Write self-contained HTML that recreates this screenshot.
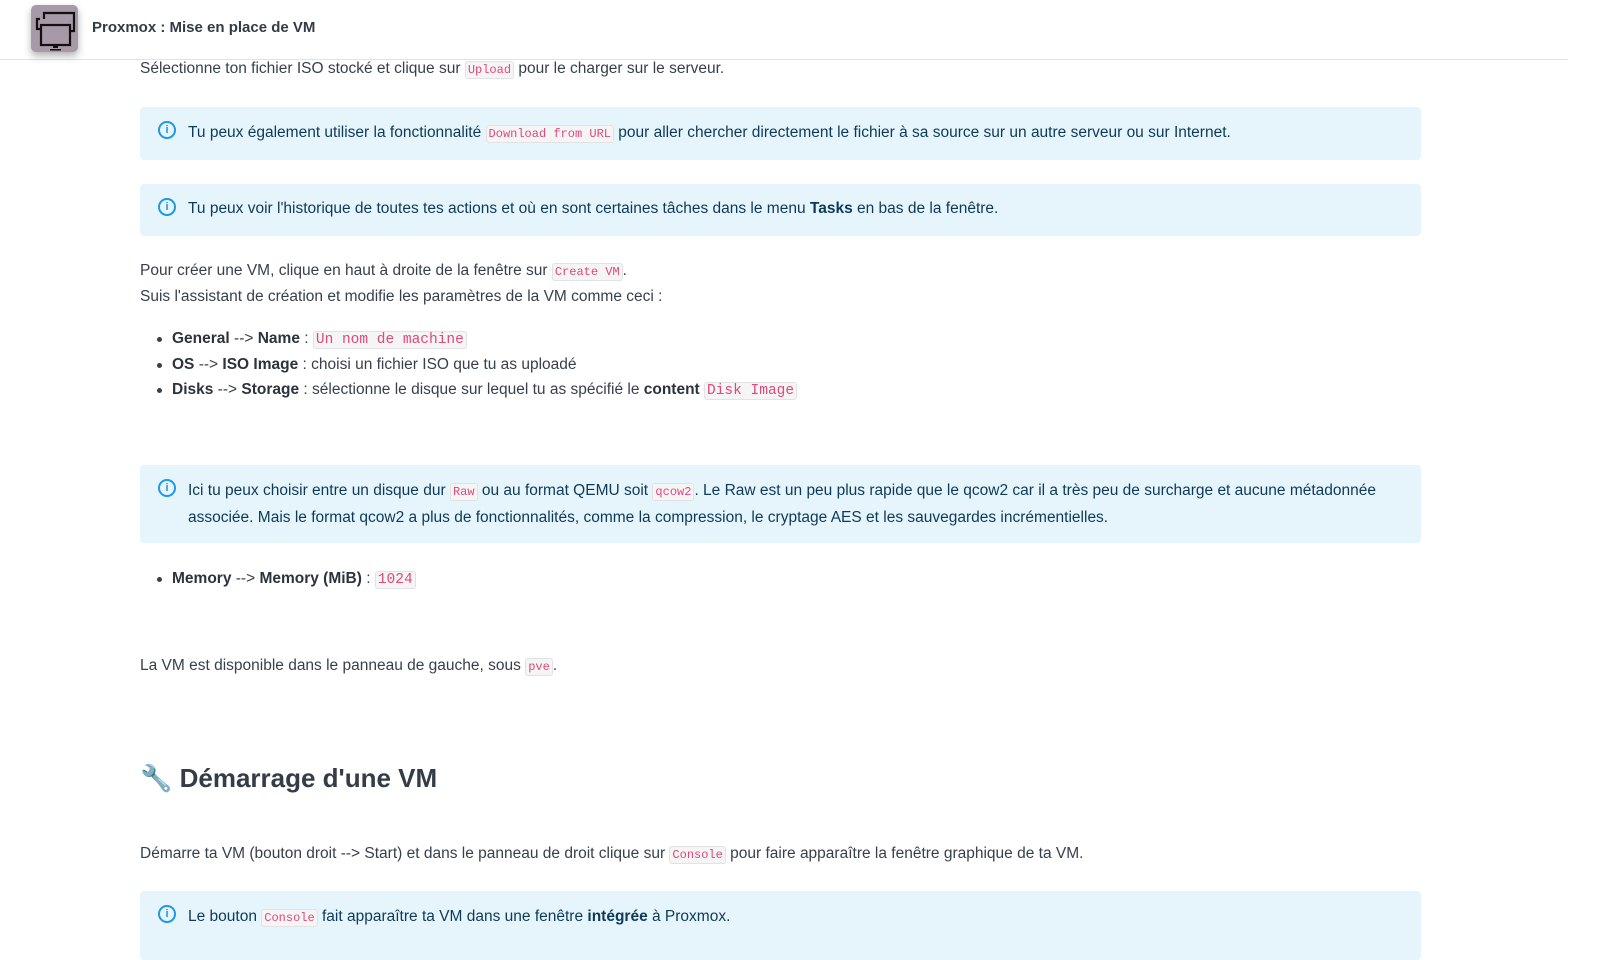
<!DOCTYPE html>
<html><head><meta charset="utf-8"><style>
*{margin:0;padding:0;box-sizing:border-box}
body{width:1614px;height:960px;overflow:hidden;background:#fff;font-family:"Liberation Sans",sans-serif;font-size:15.5px;color:#37404c;position:relative}
.hdr{position:absolute;left:0;top:0;width:1568px;height:60px;border-bottom:1px solid #e2e2e2;background:#fff}
.logo{position:absolute;left:31px;top:5px;width:47px;height:47px;border-radius:5px;background:#a899a8;box-shadow:0 4px 8px rgba(0,0,0,.3)}
.title{position:absolute;left:92px;top:19px;font-weight:bold;font-size:15px;color:#333b45}
.l{position:absolute;left:140px;white-space:nowrap}
code{font-family:"Liberation Mono",monospace;font-size:12px;color:#e0487a;background:#f5f5f5;border:1px solid #e2e2e2;border-radius:3px;padding:1px 2px}
code.b{font-size:14.5px;padding:0 2px}
.co{position:absolute;left:140px;width:1281px;background:#e6f4fc;border-radius:4px;color:#0d3a58}
.co .i{position:absolute;left:18px;top:14px;width:18px;height:18px;border:2px solid #1d9ae0;border-radius:50%;color:#1d9ae0;font-size:11px;font-weight:bold;text-align:center;line-height:14px}
.co p{position:absolute;left:48px;top:16px;line-height:26px;white-space:nowrap}
ul{position:absolute;left:172px;list-style:none}
li{position:relative;height:25.5px;line-height:25px}
li:before{content:"";position:absolute;left:-15px;top:11px;width:5px;height:5px;border-radius:50%;background:#37404c}
b{color:#2c333d}
h2{position:absolute;left:140px;top:763px;font-size:26px;color:#343c47;font-weight:bold}
</style></head><body>
<div class="hdr"><div class="logo"><svg width="47" height="47" viewBox="0 0 47 47"><g fill="none" stroke="#111" stroke-width="2.2"><path d="M13 14V8h30v18h-3"/><path d="M9 14H6v10h3"/><rect x="10" y="20" width="29" height="20" fill="#a899a8"/></g><path d="M22 40h5v3h-5z M19 44h11v1.5H19z" fill="#111"/></svg></div><div class="title">Proxmox : Mise en place de VM</div></div>
<div class="l" style="top:60px">Sélectionne ton fichier ISO stocké et clique sur <code>Upload</code> pour le charger sur le serveur.</div>
<div class="co" style="top:107px;height:53px"><div class="i">i</div><p style="top:13px">Tu peux également utiliser la fonctionnalité <code>Download from URL</code> pour aller chercher directement le fichier à sa source sur un autre serveur ou sur Internet.</p></div>
<div class="co" style="top:184px;height:52px"><div class="i">i</div><p style="top:12px">Tu peux voir l'historique de toutes tes actions et où en sont certaines tâches dans le menu <b style="color:#0d3a58">Tasks</b> en bas de la fenêtre.</p></div>
<div class="l" style="top:262px">Pour créer une VM, clique en haut à droite de la fenêtre sur <code>Create VM</code>.</div>
<div class="l" style="top:288px">Suis l'assistant de création et modifie les paramètres de la VM comme ceci :</div>
<ul style="top:326px">
<li><b>General</b> --&gt; <b>Name</b> : <code class="b">Un nom de machine</code></li>
<li><b>OS</b> --&gt; <b>ISO Image</b> : choisi un fichier ISO que tu as uploadé</li>
<li><b>Disks</b> --&gt; <b>Storage</b> : sélectionne le disque sur lequel tu as spécifié le <b>content</b> <code class="b">Disk Image</code></li>
</ul>
<div class="co" style="top:465px;height:78px"><div class="i">i</div><p style="top:13px">Ici tu peux choisir entre un disque dur <code>Raw</code> ou au format QEMU soit <code>qcow2</code>. Le Raw est un peu plus rapide que le qcow2 car il a très peu de surcharge et aucune métadonnée<br>associée. Mais le format qcow2 a plus de fonctionnalités, comme la compression, le cryptage AES et les sauvegardes incrémentielles.</p></div>
<ul style="top:566px"><li><b>Memory</b> --&gt; <b>Memory (MiB)</b> : <code class="b">1024</code></li></ul>
<div class="l" style="top:657px">La VM est disponible dans le panneau de gauche, sous <code>pve</code>.</div>
<h2>🔧 Démarrage d'une VM</h2>
<div class="l" style="top:845px">Démarre ta VM (bouton droit --&gt; Start) et dans le panneau de droit clique sur <code>Console</code> pour faire apparaître la fenêtre graphique de ta VM.</div>
<div class="co" style="top:891px;height:69px"><div class="i">i</div><p style="top:13px">Le bouton <code>Console</code> fait apparaître ta VM dans une fenêtre <b style="color:#0d3a58">intégrée</b> à Proxmox.</p></div>
</body></html>
